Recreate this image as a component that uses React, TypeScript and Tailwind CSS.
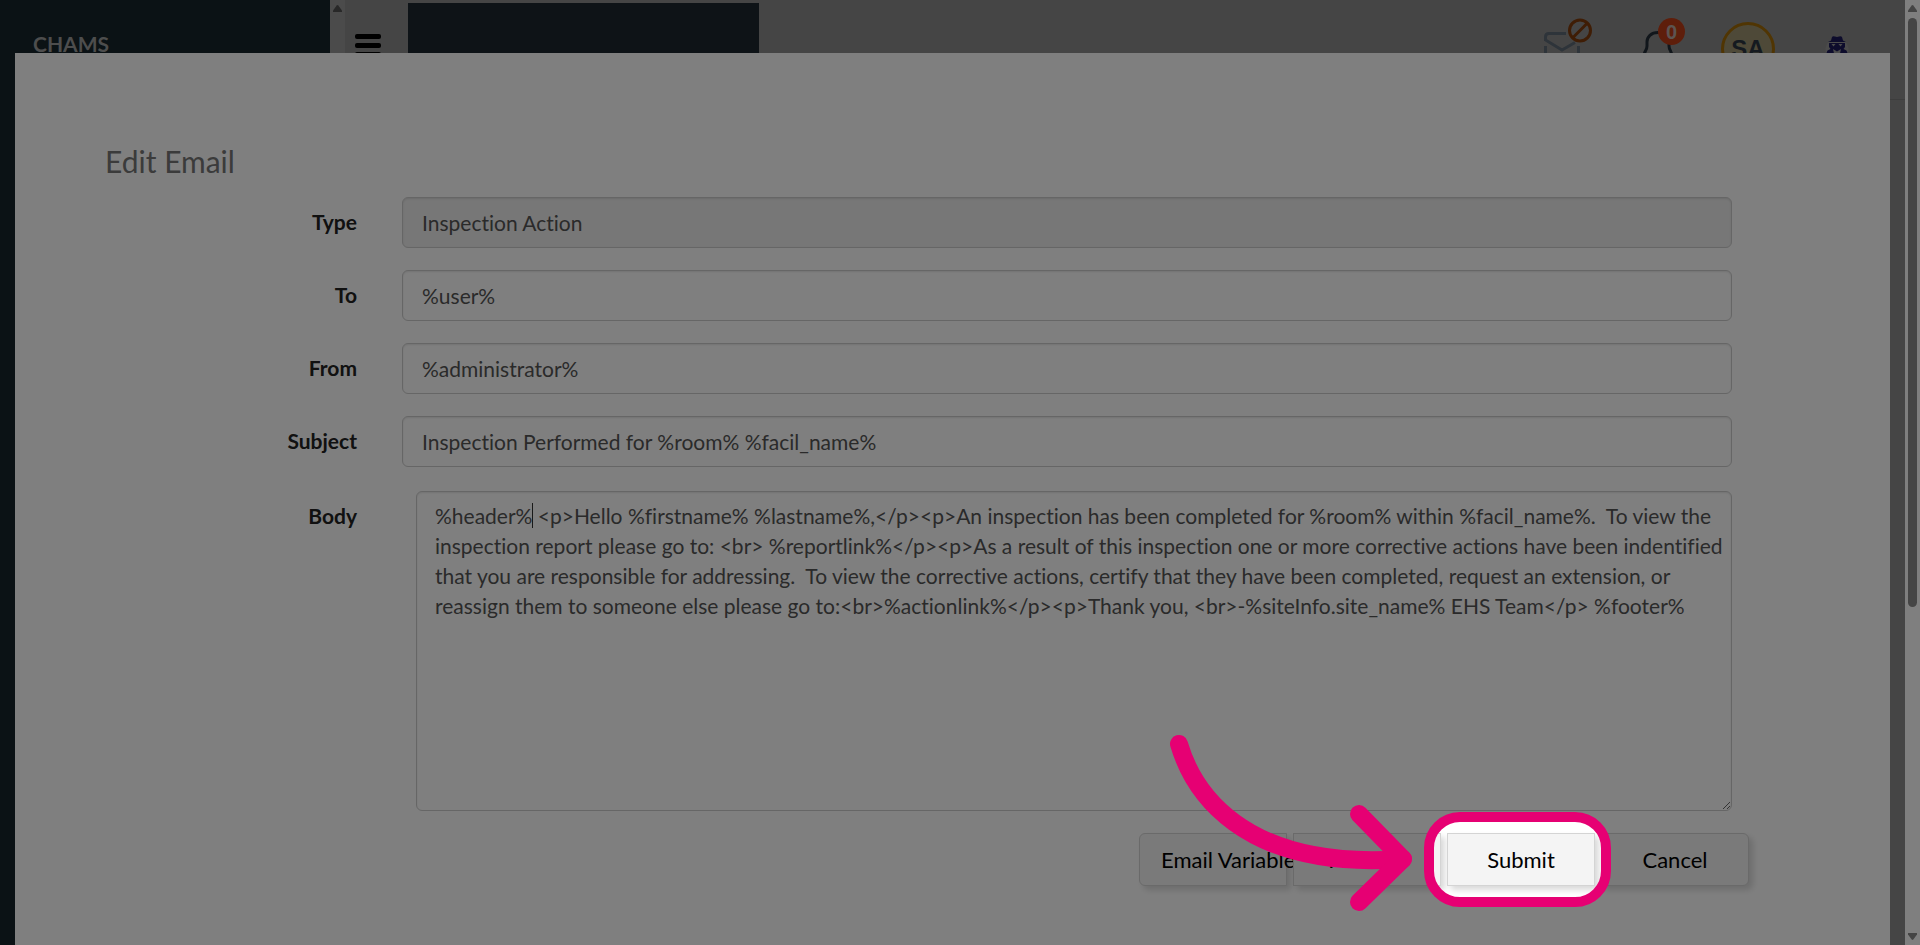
import type { ReactNode } from "react";

const BODY_TEXT =
  "%header% <p>Hello %firstname% %lastname%,</p><p>An inspection has been completed for %room% within %facil_name%.  To view the inspection report please go to: <br> %reportlink%</p><p>As a result of this inspection one or more corrective actions have been indentified that you are responsible for addressing.  To view the corrective actions, certify that they have been completed, request an extension, or reassign them to someone else please go to:<br>%actionlink%</p><p>Thank you, <br>-%siteInfo.site_name% EHS Team</p> %footer%";

const controlClass =
  "block min-w-0 flex-1 rounded-md border border-[#ccc] text-[21px] text-[#555] shadow-[inset_0_1px_2px_rgba(0,0,0,0.1)] outline-none";

const buttonClass =
  "h-[53px] w-[148px] whitespace-nowrap border border-[#d4d4d4] bg-[#f4f4f4] text-[22px] text-black shadow-[4px_4px_6px_rgba(0,0,0,0.15)]";

function FormRow({ id, label, children }: { id: string; label: string; children: ReactNode }) {
  return (
    <div className="flex items-start gap-[45px]">
      <label htmlFor={id} className="w-[251px] shrink-0 pt-[10px] text-right text-[21px] leading-[30px] font-bold text-[#222]">
        {label}
      </label>
      {children}
    </div>
  );
}

function TextField({ id, label, value, disabled }: { id: string; label: string; value: string; disabled?: boolean }) {
  return (
    <FormRow id={id} label={label}>
      <input
        id={id}
        type="text"
        defaultValue={value}
        disabled={disabled}
        className={`${controlClass} h-[51px] bg-white px-[19px] disabled:bg-[#eee]`}
      />
    </FormRow>
  );
}

function Triangle({ down }: { down?: boolean }) {
  return (
    <svg width="9" height="7" viewBox="0 0 9 7" className="shrink-0" fill="currentColor" aria-hidden="true">
      <path d={down ? "M0 0H9V1.5L5.3 6.5Q4.5 7.4 3.7 6.5L0 1.5Z" : "M0 7H9V5.5L5.3 .5Q4.5 -.4 3.7 .5L0 5.5Z"} />
    </svg>
  );
}

function EnvelopeIcon() {
  return (
    <svg width="50" height="46" viewBox="0 0 50 46" fill="none" aria-hidden="true">
      <path d="M22 15.5H5Q1.5 15.5 1.5 19V22L18 32L31 24.5M1.5 28V43H34.5V28" stroke="#5c6874" strokeWidth="3" />
      <circle cx="36" cy="12.5" r="10.5" stroke="#7e3a0a" strokeWidth="3" />
      <path d="M28.8 19.7L43.2 5.3" stroke="#7e3a0a" strokeWidth="3" />
    </svg>
  );
}

function BellIcon() {
  return (
    <svg width="34" height="44" viewBox="0 0 34 44" fill="none" stroke="#222c36" strokeWidth="3" aria-hidden="true">
      <path d="M15 1.5C8 1.5 4 6 4 11V15C4 20 .5 20 .5 28V31H29.5V28C29.5 20 26 20 26 15V11C26 6 22 1.5 15 1.5ZM10 35Q15 43 20 35" />
    </svg>
  );
}

function SpyIcon() {
  return (
    <svg width="24" height="28" viewBox="0 0 24 28" aria-hidden="true">
      <circle cx="12" cy="14" r="11.5" fill="#969696" />
      <path
        fill="#1b1858"
        d="M7 1Q8 -.3 10 .6Q12 1.3 14 .6Q16 -.3 17 1L18 4.5L21 6H3L6 4.5ZM4 7H20V11L18.5 13L21.5 14.5Q23.5 18 24 24H0Q.5 18 2.5 14.5L5.5 13L4 11Z"
      />
      <path fill="#969696" d="M6.500 8H10.500L8.500 10.500ZM13.500 8H17.500L15.500 10.500ZM8 13L12 15.500L16 13L14 22H12.800L12 17L11.200 22H10Z" />
    </svg>
  );
}

function Spotlight() {
  return (
    <div className="pointer-events-none absolute -top-[21px] -left-[23px] z-20 h-[95px] w-[187px]">
      <div className="absolute inset-2 rounded-[28px] shadow-[0_0_0_4000px_rgba(0,0,0,0.5)]" />
      <div className="absolute inset-0 rounded-[36px] border-10 border-[#e60073]" />
      <svg
        width="250"
        height="190"
        viewBox="0 0 250 190"
        className="absolute right-[197px] -bottom-[17px]"
        fill="none"
        stroke="#e60073"
        strokeWidth="18"
        strokeLinecap="round"
        strokeLinejoin="round"
        aria-hidden="true"
      >
        <path d="M15 10C28 54 75 137 239 125" />
        <path d="M195 80L239 125L195 168" />
      </svg>
    </div>
  );
}

export default function App() {
  return (
    <div className="relative flex h-screen overflow-hidden bg-[#8b8b8b] font-[Lato,sans-serif] [font-variant-ligatures:no-common-ligatures]">
      <aside className="w-[330px] shrink-0 bg-[#16242a] px-[33px] pt-[29px]">
        <span className="text-[21px] leading-[30px] font-bold text-[#9a9a9a]">CHAMS</span>
      </aside>
      <div className="flex w-[15px] shrink-0 flex-col items-center bg-[#979797] pt-[5px] text-[#505050]" aria-hidden="true">
        <Triangle />
      </div>
      <div className="min-w-0 flex-1">
        <header className="flex h-[100px] items-start border-b border-[#7a7a7a] pr-[56px] pl-[10px]">
          <button type="button" aria-label="Toggle menu" className="flex w-[26px] flex-col gap-1 pt-[34px]">
            <span className="h-[5px] rounded-xs bg-black" />
            <span className="h-[5px] rounded-xs bg-black" />
            <span className="h-[5px] rounded-xs bg-black" />
          </button>
          <div className="mt-[3px] ml-[27px] h-[90px] w-[351px] bg-[#1c262e]" />
          <div className="ml-auto flex items-start">
            <button type="button" aria-label="Email disabled" className="mt-[18px]">
              <EnvelopeIcon />
            </button>
            <button type="button" aria-label="Notifications" className="relative mt-[31px] ml-[49px]">
              <BellIcon />
              <span className="absolute -top-[13px] left-[15px] flex size-[27px] items-center justify-center rounded-full bg-[#bd3c16] font-['Liberation_Sans',sans-serif] text-[20px] font-bold text-[#b8a8a2]">
                0
              </span>
            </button>
            <button
              type="button"
              aria-label="Account"
              className="mt-[22px] ml-[44px] flex size-[54px] items-center justify-center rounded-full border-3 border-[#a06a06] bg-[#9c9270] font-['Liberation_Sans',sans-serif] text-[24px] font-bold text-[#2a3540]"
            >
              SA
            </button>
            <button type="button" aria-label="Impersonate" className="mt-9 ml-[50px]">
              <SpyIcon />
            </button>
          </div>
        </header>
      </div>
      <div className="flex w-[15px] shrink-0 flex-col items-center bg-white py-[5px] text-[#8b8b8b]" aria-hidden="true">
        <Triangle />
        <div className="mt-[6px] h-[63%] w-[9px] rounded-full bg-[#8b8b8b]" />
        <div className="mt-auto">
          <Triangle down />
        </div>
      </div>

      <section
        role="dialog"
        aria-labelledby="dialog-title"
        className="absolute top-[53px] right-[30px] bottom-0 left-[15px] bg-white pt-[88px] pl-[90px]"
      >
        <h1 id="dialog-title" className="text-[30px] leading-[40px] text-[#777]">
          Edit Email
        </h1>
        <form onSubmit={(e) => e.preventDefault()} className="pt-4 pr-[141px] pl-px">
          <div className="flex flex-col gap-[22px] pr-[17px]">
            <TextField id="type" label="Type" value="Inspection Action" disabled />
            <TextField id="to" label="To" value="%user%" />
            <TextField id="from" label="From" value="%administrator%" />
            <TextField id="subject" label="Subject" value="Inspection Performed for %room% %facil_name%" />
            <div className="pt-[2px]">
              <FormRow id="body" label="Body">
                <div className="relative flex min-w-0 flex-1 pl-[14px]">
                  <textarea
                    id="body"
                    defaultValue={BODY_TEXT}
                    className={`${controlClass} h-80 resize overflow-hidden bg-white py-[9px] pr-1 pl-[18px] leading-[30px]`}
                  />
                  <span className="absolute top-3 left-[130px] h-[25px] w-px bg-[#333]" aria-hidden="true" />
                </div>
              </FormRow>
            </div>
          </div>
          <div className="flex justify-end gap-[6px] pt-[22px]">
            <button type="button" className={`${buttonClass} rounded-l-md pl-[21px] text-left`}>
              Email Variables
            </button>
            <button type="button" className={`${buttonClass} relative`}>
              Preview
            </button>
            <div className="relative">
              <button type="submit" className={buttonClass}>
                Submit
              </button>
              <Spotlight />
            </div>
            <button type="button" className={`${buttonClass} rounded-r-md`}>
              Cancel
            </button>
          </div>
        </form>
      </section>
    </div>
  );
}
